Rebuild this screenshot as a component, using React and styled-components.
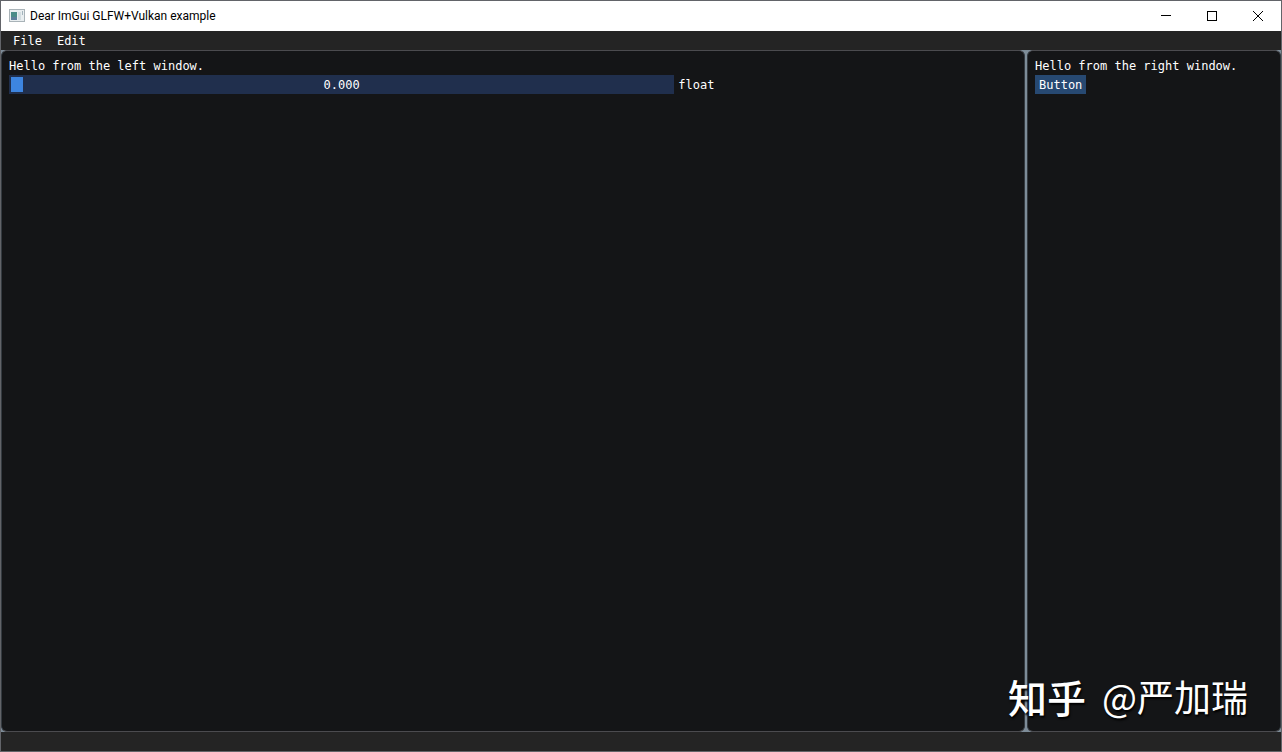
import React, { useState } from "react";
import styled, { createGlobalStyle } from "styled-components";

const GlobalStyle = createGlobalStyle`
  * {
    box-sizing: border-box;
  }
  body {
    margin: 0;
    background-color: #242424;
  }
`;

const Window = styled.div`
  display: flex;
  flex-direction: column;
  height: 100vh;
  position: relative;
  border: 1px solid #626469;
  background-color: #242424;
  color: #ffffff;
  font-family: "DejaVu Sans Mono", "Liberation Mono", monospace;
  font-size: 12px;
  line-height: 13px;
`;

const TitleBar = styled.header`
  display: flex;
  align-items: center;
  height: 30px;
  padding-left: 8px;
  flex-shrink: 0;
  background-color: #ffffff;
  color: #000000;
`;

const AppIcon = styled.svg`
  width: 16px;
  height: 16px;
  margin-right: 5px;
`;

const Title = styled.h1`
  flex: 1;
  margin: 0;
  font-family: Roboto, "Open Sans", sans-serif;
  font-size: 12px;
  font-weight: 400;
  line-height: 16px;
`;

const CaptionButton = styled.button`
  display: flex;
  align-items: center;
  justify-content: center;
  width: 46px;
  height: 30px;
  padding: 0;
  border: none;
  background-color: transparent;
  color: #000000;

  &:hover {
    background-color: #e5e5e5;
  }
`;

const MenuBar = styled.nav`
  display: flex;
  flex-shrink: 0;
  height: 19px;
  padding: 0 8px;
`;

const MenuItem = styled.button`
  padding: 2px 4px 0;
  margin-right: 7px;
  border: none;
  background-color: transparent;
  color: inherit;
  font: inherit;

  &:hover {
    background-color: #4296fa;
  }
`;

const Workspace = styled.main`
  display: grid;
  grid-template-columns: 80% 2px 1fr;
  flex: 1;
  min-height: 0;
  background-color: #7d8c98;
`;

const Panel = styled.section`
  display: flex;
  flex-direction: column;
  align-items: flex-start;
  gap: 2px;
  min-width: 0;
  padding: 8px 7px 7px;
  border: 1px solid #4b4b4f;
  border-left-color: #343a40;
  border-right-color: #343a40;
  border-radius: 6px;
  background-color: #141517;
`;

const Splitter = styled.div`
  cursor: col-resize;
`;

const Text = styled.p`
  margin: 0;
  line-height: 14px;
  white-space: nowrap;
`;

const Field = styled.div`
  display: flex;
  align-items: center;
  gap: 4px;
  width: 100%;
`;

const SliderFrame = styled.div`
  position: relative;
  width: 66%;
  height: 19px;
`;

const Slider = styled.input`
  display: block;
  appearance: none;
  width: 100%;
  height: 19px;
  margin: 0;
  padding: 2px;
  background-color: #202f4d;
  outline: none;

  &::-webkit-slider-thumb {
    appearance: none;
    width: 12px;
    height: 15px;
    background-color: #3d85e0;
  }
`;

const SliderValue = styled.output`
  position: absolute;
  inset: 0;
  display: flex;
  align-items: center;
  justify-content: center;
  padding-top: 2px;
  pointer-events: none;
`;

const SliderLabel = styled.label`
  padding-top: 2px;
`;

const Button = styled.button`
  height: 19px;
  padding: 2px 4px 0;
  border: none;
  background-color: #274972;
  color: inherit;
  font: inherit;

  &:hover {
    background-color: #4296fa;
  }
`;

const StatusBar = styled.footer`
  flex-shrink: 0;
  height: 19px;
`;

const Watermark = styled.div`
  position: absolute;
  right: 33px;
  bottom: 29px;
  display: flex;
  align-items: center;
  gap: 16px;
  font-family: "Noto Sans CJK SC", sans-serif;
  font-size: 37px;
  line-height: 52px;
  text-shadow: 1px 2px 2px #000000;
  pointer-events: none;
`;

const WatermarkBrand = styled.span`
  font-size: 39px;
  font-weight: 500;
`;

const App = () => {
  const [value, setValue] = useState(0);

  return (
    <>
      <GlobalStyle />
      <Window>
        <TitleBar>
          <AppIcon viewBox="0 0 16 16" shapeRendering="crispEdges">
            <rect x="0" y="1" width="16" height="13" fill="#a9b3b8" />
            <rect x="1" y="2" width="14" height="11" fill="#e9eef0" />
            <rect x="2" y="4" width="6" height="8" fill="#4b8c88" />
            <rect x="2" y="9" width="6" height="3" fill="#5e7f9b" />
            <rect x="9" y="4" width="3" height="8" fill="#d3dde1" />
            <rect x="13" y="3" width="1" height="4" fill="#a3b4bc" />
          </AppIcon>
          <Title>Dear ImGui GLFW+Vulkan example</Title>
          <CaptionButton type="button" aria-label="Minimize">
            <svg width="10" height="10" shapeRendering="crispEdges">
              <path d="M0 4.5H10" stroke="currentColor" />
            </svg>
          </CaptionButton>
          <CaptionButton type="button" aria-label="Maximize">
            <svg width="10" height="10" shapeRendering="crispEdges">
              <path d="M.5 .5H9.5V9.5H.5Z" fill="none" stroke="currentColor" />
            </svg>
          </CaptionButton>
          <CaptionButton type="button" aria-label="Close">
            <svg width="10" height="10">
              <path d="M0 0L10 10M10 0L0 10" stroke="currentColor" />
            </svg>
          </CaptionButton>
        </TitleBar>
        <MenuBar>
          <MenuItem type="button">File</MenuItem>
          <MenuItem type="button">Edit</MenuItem>
        </MenuBar>
        <Workspace>
          <Panel>
            <Text>Hello from the left window.</Text>
            <Field>
              <SliderFrame>
                <Slider
                  id="float"
                  type="range"
                  min="0"
                  max="1"
                  step="0.001"
                  value={value}
                  onChange={(e) => setValue(Number(e.target.value))}
                />
                <SliderValue htmlFor="float">{value.toFixed(3)}</SliderValue>
              </SliderFrame>
              <SliderLabel htmlFor="float">float</SliderLabel>
            </Field>
          </Panel>
          <Splitter />
          <Panel>
            <Text>Hello from the right window.</Text>
            <Button type="button">Button</Button>
          </Panel>
        </Workspace>
        <StatusBar />
        <Watermark>
          <WatermarkBrand>知乎</WatermarkBrand>
          <span>@严加瑞</span>
        </Watermark>
      </Window>
    </>
  );
};

export default App;
